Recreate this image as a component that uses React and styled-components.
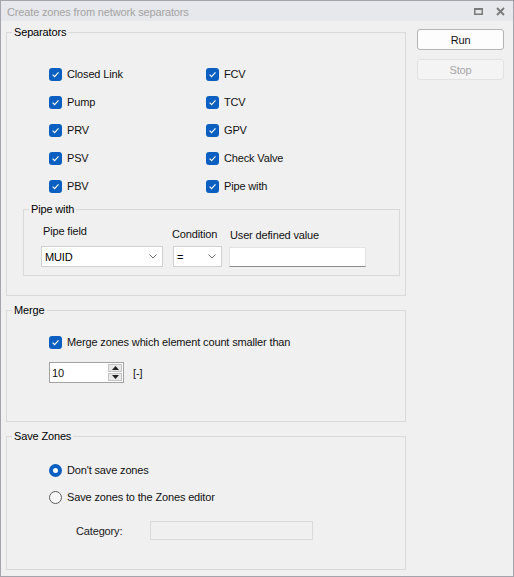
import React from "react";
import styled, { createGlobalStyle } from "styled-components";

const Global = createGlobalStyle`
  html, body {
    margin: 0;
    padding: 0;
    background: #f0f0f0;
  }
  body {
    font-family: "Liberation Sans", Arial, sans-serif;
    font-size: 11px;
    letter-spacing: -0.15px;
    color: #111;
  }
`;

const Window = styled.div`
  box-sizing: border-box;
  width: 514px;
  height: 577px;
  border: 1px solid #a4a4ac;
  background: #f0f0f0;
  display: flex;
  flex-direction: column;
`;

const TitleBar = styled.div`
  box-sizing: border-box;
  height: 20px;
  flex: none;
  display: flex;
  align-items: center;
  background: #e7e8eb;
  padding: 1px 8px 0 6px;
`;

const Title = styled.div`
  flex: 1;
  color: #a3a3a3;
  font-size: 11px;
`;

const TitleButtons = styled.div`
  display: flex;
  align-items: center;
  gap: 13px;
`;

const Body = styled.div`
  flex: 1;
  display: flex;
  gap: 11px;
  padding: 4px 9px 6px 5px;
`;

const Main = styled.div`
  width: 400px;
  display: flex;
  flex-direction: column;
  gap: 7px;
`;

const Side = styled.div`
  width: 87px;
  display: flex;
  flex-direction: column;
  gap: 9px;
  padding-top: 4px;
`;

const Button = styled.button`
  box-sizing: border-box;
  height: 21px;
  width: 100%;
  padding: 0;
  font: inherit;
  letter-spacing: inherit;
  border-radius: 3px;
  border: 1px solid ${(p) => (p.disabled ? "#e2e2e2" : "#b4b4b4")};
  background: ${(p) => (p.disabled ? "#f4f4f4" : "#fdfdfd")};
  color: ${(p) => (p.disabled ? "#a6a6a6" : "#111")};
`;

const Group = styled.fieldset`
  box-sizing: border-box;
  margin: 0;
  padding: 0;
  min-width: 0;
  border: 1px solid #d9d9d9;
  height: ${(p) => p.$h}px;
`;

const Legend = styled.legend`
  margin-left: 5px;
  padding: 0 2px;
  line-height: 14px;
  font-size: 11px;
  color: #000;
`;

const SubGroup = styled(Group)`
  margin: 2px 0 0 16px;
  width: 377px;
`;

const CheckGrid = styled.div`
  display: grid;
  grid-template-columns: 157px auto;
  grid-auto-rows: 28px;
  padding: 21px 0 0 42px;
`;

const OptionRow = styled.label`
  display: flex;
  align-items: center;
  gap: 5px;
  height: ${(p) => p.$h || 28}px;
`;

const Box = styled.span`
  box-sizing: border-box;
  width: 13px;
  height: 13px;
  border-radius: 3px;
  background: #0a5fc1;
  display: inline-flex;
  align-items: center;
  justify-content: center;
  flex: none;
`;

const Round = styled.span`
  box-sizing: border-box;
  width: 13px;
  height: 13px;
  border-radius: 50%;
  flex: none;
  display: inline-flex;
  align-items: center;
  justify-content: center;
  border: ${(p) => (p.$on ? "none" : "1px solid #5c5c5c")};
  background: ${(p) => (p.$on ? "#0a5fc1" : "#f7f7f7")};
  &::after {
    content: "";
    display: ${(p) => (p.$on ? "block" : "none")};
    width: 5px;
    height: 5px;
    border-radius: 50%;
    background: #fff;
  }
`;

const FieldRow = styled.div`
  display: flex;
  align-items: flex-end;
  padding: 0 0 8px 17px;
  height: 100%;
  box-sizing: border-box;
`;

const Field = styled.div`
  display: flex;
  flex-direction: column;
  margin-right: ${(p) => p.$mr || 0}px;
`;

const FieldLabel = styled.div`
  line-height: 14px;
  margin: 0 0 ${(p) => p.$gap}px ${(p) => p.$indent}px;
`;

const Combo = styled.div`
  box-sizing: border-box;
  width: ${(p) => p.$w}px;
  height: 21px;
  background: #fff;
  border: 1px solid #d0d0d0;
  display: flex;
  align-items: center;
  justify-content: space-between;
  padding: 0 5px 0 3px;
  color: #000;
`;

const TextBox = styled.div`
  box-sizing: border-box;
  width: ${(p) => p.$w}px;
  height: 20px;
  background: #fff;
  border: 1px solid #e3e3e3;
  border-bottom-color: #8c8c8c;
`;

const MergeBody = styled.div`
  display: flex;
  flex-direction: column;
  gap: 10px;
  padding: 15px 0 0 42px;
`;

const SpinRow = styled.div`
  display: flex;
  align-items: center;
  gap: 9px;
`;

const Spinner = styled.div`
  box-sizing: border-box;
  width: 75px;
  height: 21px;
  background: #fff;
  border: 1px solid #a2a2a2;
  display: flex;
  align-items: center;
  justify-content: space-between;
  padding: 1px 1px 1px 2px;
`;

const SpinButtons = styled.div`
  display: flex;
  flex-direction: column;
  gap: 1px;
  height: 100%;
`;

const SpinButton = styled.div`
  box-sizing: border-box;
  width: 14px;
  flex: 1;
  background: #e9e9e9;
  border: 1px solid #c4c4c4;
  display: flex;
  align-items: center;
  justify-content: center;
`;

const SaveBody = styled.div`
  display: flex;
  flex-direction: column;
  gap: 7px;
  padding: 17px 0 0 42px;
`;

const CategoryRow = styled.div`
  display: flex;
  align-items: center;
  margin: 7px 0 0 27px;
  color: #1a1a1a;
`;

const CategoryLabel = styled.span`
  width: 74px;
`;

const DisabledBox = styled.div`
  box-sizing: border-box;
  width: 163px;
  height: 19px;
  border: 1px solid #dadada;
  background: #f0f0f0;
`;

const Check = () => (
  <Box>
    <svg width="9" height="9" viewBox="0 0 9 9">
      <path d="M1.6 4.7 L3.6 6.6 L7.5 2.4" fill="none" stroke="#fff" strokeWidth="1.1" />
    </svg>
  </Box>
);

const Chevron = () => (
  <svg width="8" height="5" viewBox="0 0 8 5">
    <path d="M0.5 0.5 L4 4 L7.5 0.5" fill="none" stroke="#6a6a6a" strokeWidth="1" />
  </svg>
);

const Triangle = ({ up }) => (
  <svg width="7" height="4" viewBox="0 0 7 4">
    <path d={up ? "M0 4 L3.5 0 L7 4 Z" : "M0 0 L3.5 4 L7 0 Z"} fill="#222" />
  </svg>
);

const separators = [
  ["Closed Link", "FCV"],
  ["Pump", "TCV"],
  ["PRV", "GPV"],
  ["PSV", "Check Valve"],
  ["PBV", "Pipe with"],
];

export default function App() {
  return (
    <>
      <Global />
      <Window>
        <TitleBar>
          <Title>Create zones from network separators</Title>
          <TitleButtons>
            <svg width="9" height="7" viewBox="0 0 9 7">
              <rect x="0.75" y="1" width="7.5" height="5.25" fill="none" stroke="#7a7a7a" strokeWidth="1.5" />
              <rect x="0" y="0" width="9" height="2" fill="#7a7a7a" />
            </svg>
            <svg width="9" height="9" viewBox="0 0 9 9">
              <path d="M1 1 L8 8 M8 1 L1 8" stroke="#7a7a7a" strokeWidth="1.8" />
            </svg>
          </TitleButtons>
        </TitleBar>
        <Body>
          <Main>
            <Group $h={271}>
              <Legend>Separators</Legend>
              <CheckGrid>
                {separators.flat().map((name) => (
                  <OptionRow key={name}>
                    <Check />
                    {name}
                  </OptionRow>
                ))}
              </CheckGrid>
              <SubGroup $h={74}>
                <Legend>Pipe with</Legend>
                <FieldRow>
                  <Field $mr={10}>
                    <FieldLabel $gap={8} $indent={2}>Pipe field</FieldLabel>
                    <Combo $w={122}>
                      MUID
                      <Chevron />
                    </Combo>
                  </Field>
                  <Field $mr={7}>
                    <FieldLabel $gap={5} $indent={-1}>Condition</FieldLabel>
                    <Combo $w={49}>
                      =
                      <Chevron />
                    </Combo>
                  </Field>
                  <Field>
                    <FieldLabel $gap={5} $indent={1}>User defined value</FieldLabel>
                    <TextBox $w={137} />
                  </Field>
                </FieldRow>
              </SubGroup>
            </Group>

            <Group $h={119}>
              <Legend>Merge</Legend>
              <MergeBody>
                <OptionRow $h={20}>
                  <Check />
                  Merge zones which element count smaller than
                </OptionRow>
                <SpinRow>
                  <Spinner>
                    <span>10</span>
                    <SpinButtons>
                      <SpinButton>
                        <Triangle up />
                      </SpinButton>
                      <SpinButton>
                        <Triangle />
                      </SpinButton>
                    </SpinButtons>
                  </Spinner>
                  <span>[-]</span>
                </SpinRow>
              </MergeBody>
            </Group>

            <Group $h={141}>
              <Legend>Save Zones</Legend>
              <SaveBody>
                <OptionRow $h={20}>
                  <Round $on />
                  Don't save zones
                </OptionRow>
                <OptionRow $h={20}>
                  <Round />
                  Save zones to the Zones editor
                </OptionRow>
                <CategoryRow>
                  <CategoryLabel>Category:</CategoryLabel>
                  <DisabledBox />
                </CategoryRow>
              </SaveBody>
            </Group>
          </Main>
          <Side>
            <Button>Run</Button>
            <Button disabled>Stop</Button>
          </Side>
        </Body>
      </Window>
    </>
  );
}
